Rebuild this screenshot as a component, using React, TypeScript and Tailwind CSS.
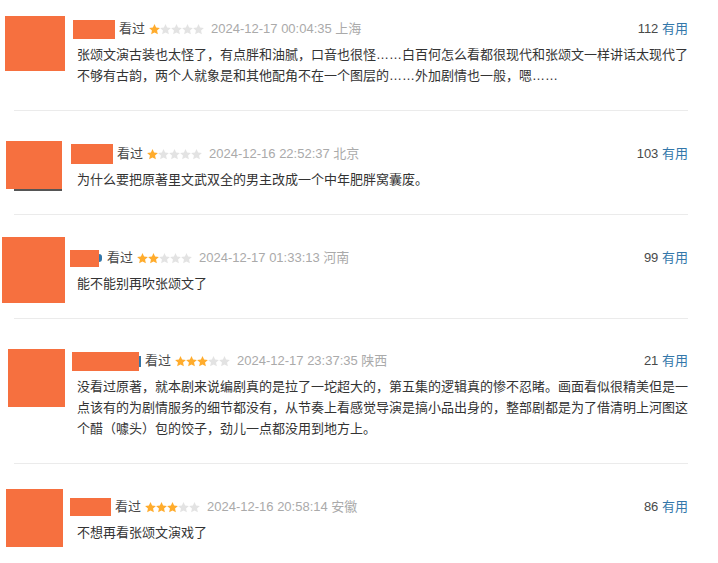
import React from "react";

type Review = {
  avatar: string;
  avatarLine?: boolean;
  name: string;
  tail?: string;
  seen: string;
  stars: number;
  time: string;
  place: string;
  votes: number;
  text: string;
  pt: string;
};

const reviews: Review[] = [
  {
    avatar: "ml-[5px] mt-[-3px] w-[60px] h-[55px]",
    name: "ml-[-4px] w-[42px] h-[19px]",
    seen: "ml-[4px]",
    stars: 1,
    time: "2024-12-17 00:04:35",
    place: "上海",
    votes: 112,
    text: "张颂文演古装也太怪了，有点胖和油腻，口音也很怪……白百何怎么看都很现代和张颂文一样讲话太现代了不够有古韵，两个人就象是和其他配角不在一个图层的……外加剧情也一般，嗯……",
    pt: "pt-[19px]",
  },
  {
    avatar: "ml-[6px] mt-[-3px] w-[56px] h-[48px]",
    avatarLine: true,
    name: "ml-[-6px] w-[42px] h-[20px]",
    seen: "ml-[4px]",
    stars: 1,
    time: "2024-12-16 22:52:37",
    place: "北京",
    votes: 103,
    text: "为什么要把原著里文武双全的男主改成一个中年肥胖窝囊废。",
    pt: "pt-[33px]",
  },
  {
    avatar: "ml-[2px] mt-[-11px] w-[63px] h-[66px]",
    name: "ml-[-7px] w-[29px] h-[17px]",
    tail: "w-[3px] h-[8px] rounded-r-full",
    seen: "ml-[5px]",
    stars: 2,
    time: "2024-12-17 01:33:13",
    place: "河南",
    votes: 99,
    text: "能不能别再吹张颂文了",
    pt: "pt-[33px]",
  },
  {
    avatar: "ml-[8px] mt-[-2px] w-[57px] h-[58px]",
    name: "ml-[-5px] w-[67px] h-[19px]",
    tail: "w-[2px] h-[11px]",
    seen: "ml-[4px]",
    stars: 3,
    time: "2024-12-17 23:37:35",
    place: "陕西",
    votes: 21,
    text: "没看过原著，就本剧来说编剧真的是拉了一坨超大的，第五集的逻辑真的惨不忍睹。画面看似很精美但是一点该有的为剧情服务的细节都没有，从节奏上看感觉导演是搞小品出身的，整部剧都是为了借清明上河图这个醋（噱头）包的饺子，劲儿一点都没用到地方上。",
    pt: "pt-[32px]",
  },
  {
    avatar: "ml-[6px] mt-[-8px] w-[57px] h-[58px]",
    name: "ml-[-7px] w-[41px] h-[18px]",
    seen: "ml-[4px]",
    stars: 3,
    time: "2024-12-16 20:58:14",
    place: "安徽",
    votes: 86,
    text: "不想再看张颂文演戏了",
    pt: "pt-[33px]",
  },
];

function Stars({ n }: { n: number }) {
  return (
    <span className="ml-[4px] inline-flex">
      {[0, 1, 2, 3, 4].map((i) => (
        <svg key={i} width="11" height="11" viewBox="1 1 22 22">
          <path
            d="M12 1.2l3.2 7 7.6.8-5.7 5.1 1.6 7.5L12 17.8l-6.7 3.8 1.6-7.5-5.7-5.1 7.6-.8z"
            fill={i < n ? "#ffac2d" : "#e3e3e3"}
          />
        </svg>
      ))}
    </span>
  );
}

function ReviewItem({ r }: { r: Review }) {
  return (
    <div className={`flex pb-[24px] ${r.pt}`}>
      {/* avatar hangs loose so it never stretches the row */}
      <div className="h-0 w-[77px] shrink-0">
        <div className={`bg-[#f6703f] ${r.avatar}`} />
        {r.avatarLine && <div className="ml-[14px] h-[2px] w-[48px] bg-[#555]" />}
      </div>
      <div className="min-w-0 flex-1">
        <div className="flex h-[20px] items-center justify-between text-[13px]">
          <div className="flex items-center whitespace-nowrap">
            <span className={`bg-[#f6703f] ${r.name}`} />
            {r.tail && <span className={`bg-[#3377aa] ${r.tail}`} />}
            <span className={`text-[#494949] ${r.seen}`}>看过</span>
            <Stars n={r.stars} />
            <span className="ml-[7px] text-[#aaa]">
              {r.time} {r.place}
            </span>
          </div>
          <div className="whitespace-nowrap">
            <span className="text-[#494949]">{r.votes}</span>{" "}
            <span className="text-[#3377aa]">有用</span>
          </div>
        </div>
        <p className="mr-[-6px] mt-[5px] text-[13px] leading-[21px] text-[#333]">{r.text}</p>
      </div>
    </div>
  );
}

export default function App() {
  return (
    <div className="h-[563px] w-[718px] overflow-hidden bg-white font-['Liberation_Sans','Noto_Sans_CJK_SC',sans-serif]">
      <div className="w-[688px]">
        {reviews.map((r, i) => (
          <div key={i}>
            {i > 0 && <div className="ml-[14px] h-px bg-[#ebebeb]" />}
            <ReviewItem r={r} />
          </div>
        ))}
      </div>
    </div>
  );
}
